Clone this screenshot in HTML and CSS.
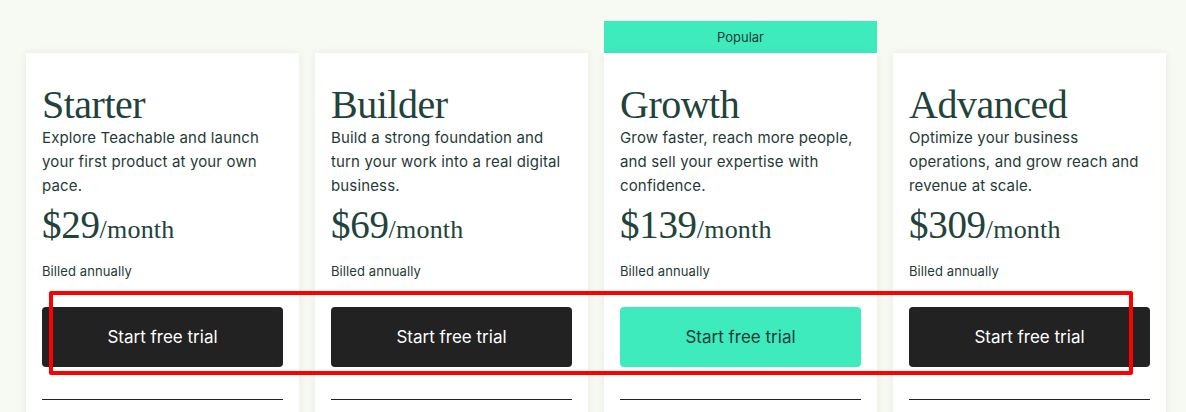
FILE: index.html
```
<!DOCTYPE html>
<html lang="en">
<head>
<meta charset="utf-8">
<title>Pricing</title>
<link rel="stylesheet" href="styles.css">
</head>
<body>
<div class="page">
  <div class="plans">
    <div class="plan">
      <div class="banner banner-empty"></div>
      <div class="card">
        <h2 class="title">Starter</h2>
        <p class="desc">Explore Teachable and launch your first product at your own pace.</p>
        <div class="price"><span class="amount">$29</span><span class="per">/month</span></div>
        <div class="billed">Billed annually</div>
        <a class="btn">Start free trial</a>
        <div class="divider"></div>
      </div>
    </div>
    <div class="plan">
      <div class="banner banner-empty"></div>
      <div class="card">
        <h2 class="title">Builder</h2>
        <p class="desc">Build a strong foundation and turn your work into a real digital business.</p>
        <div class="price"><span class="amount">$69</span><span class="per">/month</span></div>
        <div class="billed">Billed annually</div>
        <a class="btn">Start free trial</a>
        <div class="divider"></div>
      </div>
    </div>
    <div class="plan">
      <div class="banner">Popular</div>
      <div class="card">
        <h2 class="title">Growth</h2>
        <p class="desc">Grow faster, reach more people, and sell your expertise with confidence.</p>
        <div class="price"><span class="amount">$139</span><span class="per">/month</span></div>
        <div class="billed">Billed annually</div>
        <a class="btn btn-accent">Start free trial</a>
        <div class="divider"></div>
      </div>
    </div>
    <div class="plan">
      <div class="banner banner-empty"></div>
      <div class="card">
        <h2 class="title">Advanced</h2>
        <p class="desc">Optimize your business operations, and grow reach and revenue at scale.</p>
        <div class="price"><span class="amount">$309</span><span class="per">/month</span></div>
        <div class="billed">Billed annually</div>
        <a class="btn">Start free trial</a>
        <div class="divider"></div>
      </div>
    </div>
  </div>
  <div class="highlight"></div>
</div>
</body>
</html>
```
FILE: styles.css
```
html, body {
  margin: 0;
  padding: 0;
  height: 100%;
  overflow: hidden;
  background: #f7f9f3;
}
.page {
  position: relative;
  height: 412px;
  overflow: hidden;
}
.plans {
  display: flex;
  gap: 16px;
  padding: 21px 0 0 26px;
}
.plan {
  width: 273px;
  display: flex;
  flex-direction: column;
}
.banner {
  height: 32px;
  background: #3eebbd;
  color: #1f3b37;
  font-family: Inter, "Liberation Sans", sans-serif;
  font-size: 13px;
  line-height: 32px;
  text-align: center;
}
.banner-empty {
  background: transparent;
}
.card {
  background: #ffffff;
  box-shadow: 0 0 8px rgba(40, 60, 20, 0.07);
  padding: 30px 16px 0 16px;
  min-height: 600px;
  display: flex;
  flex-direction: column;
}
.title {
  margin: 0;
  font-family: "Liberation Serif", serif;
  font-weight: 400;
  font-size: 40px;
  line-height: 43px;
  letter-spacing: -0.5px;
  color: #21433c;
}
.desc {
  margin: 0;
  font-family: Inter, "Liberation Sans", sans-serif;
  font-size: 15px;
  line-height: 24px;
  letter-spacing: 0.15px;
  color: #1f3b37;
}
.price {
  margin-top: 3px;
  font-family: "Liberation Serif", serif;
  color: #21433c;
  line-height: 48px;
  white-space: nowrap;
}
.amount {
  font-size: 39px;
  letter-spacing: -0.3px;
}
.per {
  font-size: 26px;
  letter-spacing: 0.2px;
}
.billed {
  margin-top: 4px;
  font-family: Inter, "Liberation Sans", sans-serif;
  font-size: 13px;
  line-height: 20px;
  letter-spacing: 0.1px;
  color: #1f3b37;
}
.btn {
  margin-top: 26px;
  height: 60px;
  border-radius: 4px;
  background: #222222;
  color: #ffffff;
  font-family: Inter, "Liberation Sans", sans-serif;
  font-size: 17px;
  display: flex;
  align-items: center;
  justify-content: center;
}
.btn-accent {
  background: #3eebbd;
  color: #1f3b37;
}
.divider {
  margin-top: 32px;
  height: 1px;
  background: #222222;
}
.highlight {
  position: absolute;
  left: 49px;
  top: 291px;
  width: 1084px;
  height: 84px;
  box-sizing: border-box;
  border: 4px solid #ff0000;
  border-radius: 2px;
}
```
